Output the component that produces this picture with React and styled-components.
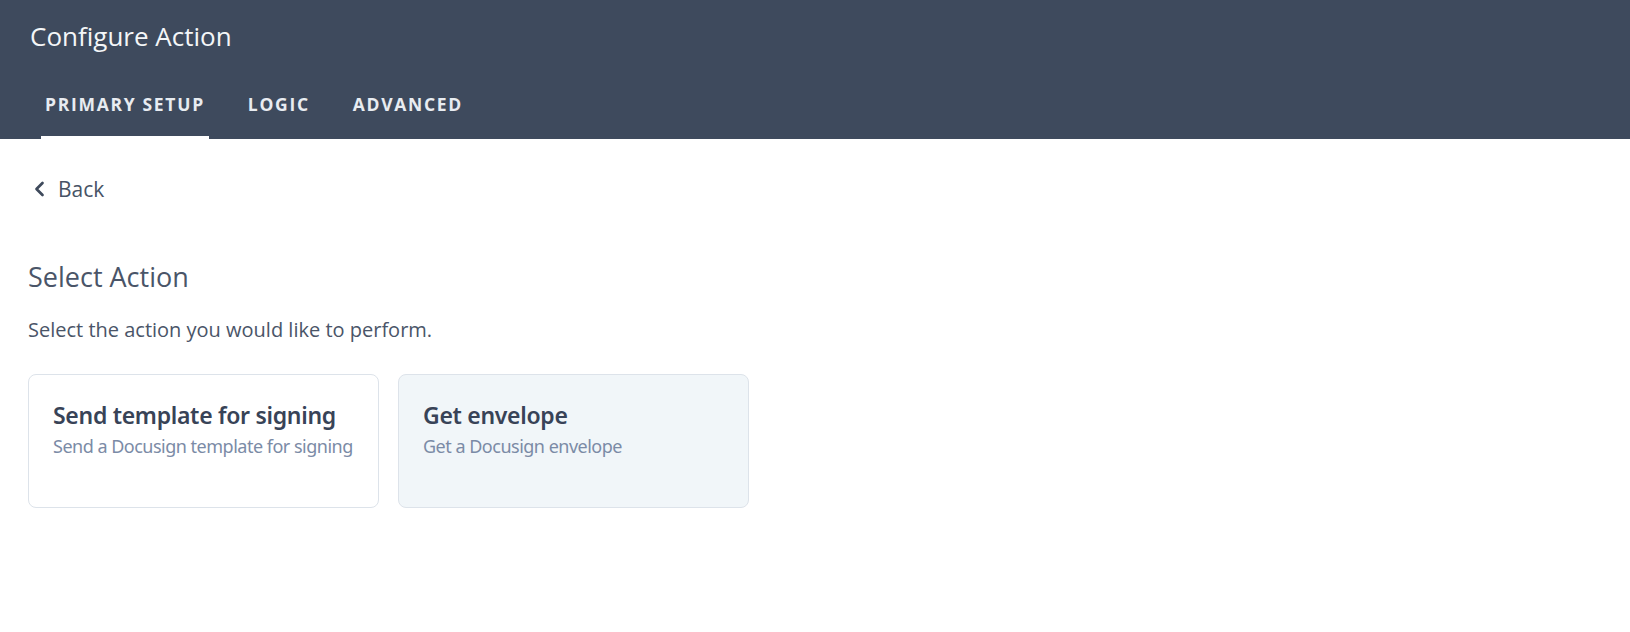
import React, { useState } from "react";
import styled, { createGlobalStyle } from "styled-components";

const Global = createGlobalStyle`
  html, body { margin: 0; padding: 0; background: #ffffff; }
  body { font-family: "Open Sans", "Noto Sans", sans-serif; -webkit-font-smoothing: antialiased; }
  * { box-sizing: border-box; }
`;

const Page = styled.div`
  width: 1630px;
  min-height: 632px;
  background: #fff;
`;

const Header = styled.header`
  background: #3e4a5d;
  height: 139px;
  padding: 0 0 0 30px;
  display: flex;
  flex-direction: column;
`;

const HeaderTitle = styled.h1`
  margin: 0;
  padding-top: 20px;
  font-size: 26px;
  line-height: 32px;
  font-weight: 400;
  color: #f4f6f8;
`;

const Tabs = styled.nav`
  margin-top: auto;
  display: flex;
  gap: 35px;
  margin-left: 11px;
`;

const Tab = styled.button`
  background: none;
  border: none;
  padding: 0 4px 22px;
  margin: 0;
  font-family: inherit;
  font-size: 17.5px;
  font-weight: 700;
  letter-spacing: 1.7px;
  color: #e8ecf1;
  border-bottom: 3px solid ${(p) => (p.$active ? "#ffffff" : "transparent")};
  cursor: pointer;
  line-height: 20px;
`;

const Content = styled.main`
  padding: 0 0 0 28px;
`;

const BackLink = styled.a`
  display: inline-flex;
  align-items: center;
  gap: 12px;
  margin-top: 38px;
  margin-left: 5px;
  font-size: 21px;
  font-weight: 500;
  color: #475366;
  text-decoration: none;
  cursor: pointer;
  line-height: 24px;
`;

const SectionTitle = styled.h2`
  margin: 59px 0 0;
  font-size: 27px;
  font-weight: 400;
  color: #4a5568;
  line-height: 32px;
`;

const SectionText = styled.p`
  margin: 25px 0 0;
  font-size: 20px;
  color: #4a5568;
  line-height: 24px;
`;

const CardGrid = styled.div`
  margin-top: 32px;
  display: flex;
  gap: 19px;
`;

const Card = styled.div`
  width: 351px;
  height: 134px;
  border: 1px solid #dde3ea;
  border-radius: 8px;
  background: ${(p) => (p.$selected ? "#f1f6f9" : "#ffffff")};
  padding: 26px 8px 26px 24px;
  cursor: pointer;
  font-family: "Noto Sans", "Open Sans", sans-serif;
`;

const CardTitle = styled.div`
  font-size: 23px;
  font-weight: 600;
  color: #384357;
  line-height: 28px;
  letter-spacing: -0.3px;
  white-space: nowrap;
`;

const CardDesc = styled.div`
  margin-top: 6px;
  font-size: 18px;
  color: #7b8ba6;
  line-height: 22px;
  letter-spacing: -0.5px;
  white-space: nowrap;
`;

const Chevron = () => (
  <svg width="13" height="16" viewBox="0 0 13 16" fill="none">
    <path d="M9.5 2 L3.5 8 L9.5 14" stroke="#3f4a5c" strokeWidth="2.7" strokeLinecap="round" strokeLinejoin="round" />
  </svg>
);

const actions = [
  { title: "Send template for signing", desc: "Send a Docusign template for signing" },
  { title: "Get envelope", desc: "Get a Docusign envelope" },
];

export default function App() {
  const [tab] = useState("PRIMARY SETUP");
  return (
    <Page>
      <Global />
      <Header>
        <HeaderTitle>Configure Action</HeaderTitle>
        <Tabs>
          {["PRIMARY SETUP", "LOGIC", "ADVANCED"].map((t) => (
            <Tab key={t} $active={t === tab}>{t}</Tab>
          ))}
        </Tabs>
      </Header>
      <Content>
        <BackLink>
          <Chevron />
          Back
        </BackLink>
        <SectionTitle>Select Action</SectionTitle>
        <SectionText>Select the action you would like to perform.</SectionText>
        <CardGrid>
          {actions.map((a, i) => (
            <Card key={a.title} $selected={i === 1}>
              <CardTitle>{a.title}</CardTitle>
              <CardDesc>{a.desc}</CardDesc>
            </Card>
          ))}
        </CardGrid>
      </Content>
    </Page>
  );
}
